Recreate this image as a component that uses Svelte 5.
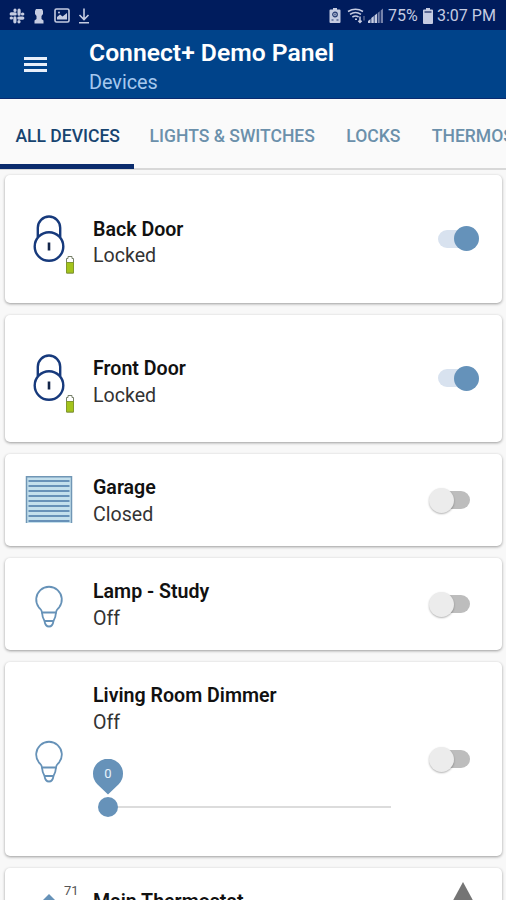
<script lang="ts">
    type Device = {
        name: string;
        status: string;
        kind: "lock" | "garage" | "bulb" | "thermostat";
        on?: boolean;
        level?: number;
    };

    const tabs = ["All Devices", "Lights & Switches", "Locks", "Thermostats"];
    let activeTab = 0;

    let devices: Device[] = [
        { name: "Back Door", status: "Locked", kind: "lock", on: true },
        { name: "Front Door", status: "Locked", kind: "lock", on: true },
        { name: "Garage", status: "Closed", kind: "garage", on: false },
        { name: "Lamp - Study", status: "Off", kind: "bulb", on: false },
        { name: "Living Room Dimmer", status: "Off", kind: "bulb", on: false, level: 0 },
        { name: "Main Thermostat", status: "Heat", kind: "thermostat" },
    ];

    const slats = [5, 10, 15, 20, 25, 30, 35, 40, 45];

    function toggle(device: Device) {
        device.on = !device.on;
        devices = devices;
    }
</script>

<div class="screen">
    <div class="status-bar">
        <div class="notifications">
            <svg class="slack" width="16" height="16" viewBox="0 0 16 16">
                <path d="M6.2 5.900H2.200M10.100 6.200V2.200M9.800 10.100h4M5.900 9.800v4" />
                <path d="M6 2.200v.3M13.500 6h.3M10 13.500v.3M2.200 10h.3" />
            </svg>
            <svg class="keyhole" width="10" height="16" viewBox="0 0 10 16">
                <path d="M2 1h6l1 2v3L7.5 8v3l2 1.500v3H.5v-3l2-1.500V8L1 6V3z" />
            </svg>
            <svg class="picture" width="16" height="15" viewBox="0 0 16 15">
                <rect x="1" y="1" width="14" height="13" rx="1.5" />
                <path d="M3 11.5V9l3-2.500 2.500 2L13 5v6.500z" />
                <circle cx="5" cy="4.5" r="1" />
            </svg>
            <svg class="download" width="12" height="16" viewBox="0 0 12 16">
                <path d="M6 .5v11M1.5 7L6 11.5 10.5 7M1 14.7h10" />
            </svg>
        </div>
        <div class="system">
            <svg class="saver" width="12" height="15" viewBox="0 0 12 15">
                <path class="solid" d="M4 0h4v1.5h2.500q1 0 1 1V14q0 1-1 1h-9q-1 0-1-1V2.500q0-1 1-1H4z" />
                <circle cx="6" cy="6.5" r="2.3" />
                <path d="M2.5 12h2M7.5 12h2M6 5.5v2" />
            </svg>
            <svg class="wifi" width="19" height="16" viewBox="0 0 19 16">
                <path d="M1 3.5q7.500-4.500 15 0M3 6.300q5.500-3.600 11 0M5.400 9q3.100-2 6.200 0" />
                <path d="M8 11.2h2M13 8.500v6M11.300 12.800l1.700 1.700 1.700-1.700" />
                <path class="faint" d="M17 12.5V8" />
            </svg>
            <svg class="signal" width="15" height="15" viewBox="0 0 15 15">
                <path d="M0 15v-2l2.500-2v4zM3.300 15v-5l2.500-2v7zM6.500 15V7.500L9 5.500V15z" />
                <path class="dim" d="M9.700 5l2-1.700V15h-2zM12.700 2.500L15 .5V15h-2.300z" />
            </svg>
            <span class="percent">75%</span>
            <svg class="battery" width="10" height="16" viewBox="0 0 10 16">
                <path d="M3 0h4v1.5h2q1 0 1 1V15q0 1-1 1H1q-1 0-1-1V2.500q0-1 1-1h2z" />
                <path class="gap" d="M1.5 3h7v2h-7z" />
            </svg>
            <span class="clock">3:07 PM</span>
        </div>
    </div>

    <header>
        <button class="menu" aria-label="Menu">
            <i></i>
            <i></i>
            <i></i>
        </button>
        <div>
            <h1>Connect+ Demo Panel</h1>
            <p>Devices</p>
        </div>
    </header>

    <nav>
        {#each tabs as tab, i}
            <button class:active={i === activeTab} on:click={() => (activeTab = i)}>{tab}</button>
        {/each}
    </nav>

    <main>
        {#each devices as device}
            <div
                class="card"
                class:lock={device.kind === "lock"}
                class:dimmer={device.level !== undefined}
                class:thermostat={device.kind === "thermostat"}
            >
                <div class="icon">
                    {#if device.kind === "lock"}
                        <svg width="48" height="48" viewBox="0 0 48 48">
                            <g fill="none" stroke="#173a7c" stroke-width="2.4">
                                <path d="M12.8 22V12.700a11.200 11.200 0 0 1 22.400 0V22" />
                                <circle cx="24" cy="31.5" r="14.300" />
                            </g>
                            <path d="M24 27.5v8" stroke="#14264a" stroke-width="2.6" />
                        </svg>
                        <svg class="badge" width="10" height="19" viewBox="0 0 10 19">
                            <path d="M3 1.5h4v2h1.500V18h-7V3.500H3z" fill="#fff" stroke="#77806a" />
                            <path d="M1.5 7.5h7V18h-7z" fill="#a4c41c" stroke="#82992c" />
                        </svg>
                    {:else if device.kind === "garage"}
                        <svg width="48" height="48" viewBox="0 0 48 48">
                            <path d="M1 0h46v47H1z" fill="#c3dfec" />
                            <path d="M1.5 47V.8h45V47" fill="none" stroke="#7096b5" stroke-width="1.5" />
                            {#each slats as y}
                                <path d="M3.5 {y}h41" stroke="#6791b8" stroke-width="2" />
                            {/each}
                        </svg>
                    {:else if device.kind === "bulb"}
                        <svg width="48" height="48" viewBox="0 0 48 48">
                            <g fill="none" stroke="#6692b8" stroke-width="1.8">
                                <path d="M17 32.5C17 30 15.300 29 13.800 27.300A12.800 12.800 0 1 1 34.200 27.300C32.700 29 31 30 31 32.500z" />
                                <path d="M17 32.5q.3 5 2.500 8.500h9q2.200-3.500 2.500-8.500M19.500 41q.8 5.500 4.500 5.500t4.500-5.500" />
                            </g>
                        </svg>
                    {:else}
                        <svg width="48" height="48" viewBox="0 0 48 48">
                            <path d="M24 4l14 14-14 14-14-14z" fill="#6692b8" />
                        </svg>
                        <span class="temperature">71</span>
                    {/if}
                </div>

                <div class="info">
                    <h2>{device.name}</h2>
                    <p>{device.status}</p>
                    {#if device.level !== undefined}
                        <div class="slider">
                            <div class="handle" style="left: {device.level}%">
                                <div class="bubble">
                                    <svg width="30" height="36" viewBox="0 0 30 36">
                                        <path d="M15 35.5L4.300 25.200a15 15 0 1 1 21.400 0z" fill="#6692b9" />
                                    </svg>
                                    <span>{device.level}</span>
                                </div>
                            </div>
                        </div>
                    {/if}
                </div>

                {#if device.kind === "thermostat"}
                    <svg class="up" width="26" height="24" viewBox="0 0 26 24">
                        <path d="M13 0l13 24H0z" fill="#757575" />
                    </svg>
                {:else}
                    <button
                        class="switch"
                        class:on={device.on}
                        aria-label={device.name}
                        on:click={() => toggle(device)}
                    ></button>
                {/if}
            </div>
        {/each}
    </main>
</div>

<style>
    :global(body) {
        margin: 0;
        overflow: hidden;
    }

    .screen {
        width: 506px;
        height: 900px;
        overflow: hidden;
        background: #f8f8f8;
        font-family: Roboto, "Liberation Sans", sans-serif;
        color: #111;
    }

    svg {
        display: block;
        flex-shrink: 0;
    }

    button {
        border: none;
        padding: 0;
        background: none;
        font-family: inherit;
    }

    h1,
    h2,
    p {
        margin: 0;
    }

    .status-bar {
        display: flex;
        justify-content: space-between;
        align-items: center;
        height: 30px;
        padding: 1px 9px 0;
        box-sizing: border-box;
        background: #001c5d;
        color: #c5cce2;
        fill: #c5cce2;
    }

    .notifications,
    .system {
        display: flex;
        align-items: center;
    }

    .notifications {
        gap: 9px;
    }

    .slack,
    .download,
    .wifi {
        fill: none;
        stroke: #c5cce2;
        stroke-width: 1.6;
    }

    .slack {
        stroke-width: 3.2;
        stroke-linecap: round;
    }

    .picture rect {
        fill: none;
        stroke: #c5cce2;
        stroke-width: 1.6;
    }

    .picture {
        margin-left: 1px;
    }

    .download {
        margin-left: -1px;
    }

    .saver circle,
    .saver path:not(.solid) {
        fill: none;
        stroke: #253b72;
        stroke-width: 1.2;
    }

    .wifi {
        margin-left: 6px;
        stroke-width: 1.5;
    }

    .wifi .faint {
        stroke: #56658f;
    }

    .signal {
        margin-left: 2px;
    }

    .dim {
        fill: #7582aa;
    }

    .percent,
    .clock {
        font-size: 16px;
        line-height: 20px;
        white-space: nowrap;
    }

    .percent {
        width: 30px;
        margin-left: 5px;
    }

    .battery {
        margin: 0 4px 0 5px;
    }

    .gap {
        fill: #5b6893;
    }

    .clock {
        width: 60px;
    }

    header {
        display: flex;
        height: 69px;
        box-sizing: border-box;
        border-bottom: 1px solid #0a2b70;
        background: #00438a;
        color: #fff;
    }

    .menu {
        display: flex;
        flex-direction: column;
        gap: 3px;
        width: 23px;
        margin: 27px 42px 0 24px;
    }

    .menu i {
        height: 3px;
        background: #e8effa;
    }

    h1 {
        margin-top: 7px;
        font-size: 24.7px;
        font-weight: 600;
        line-height: 32px;
        white-space: nowrap;
    }

    header p {
        font-size: 19.8px;
        line-height: 27px;
        color: #a6c8ee;
    }

    nav {
        position: relative;
        display: flex;
        height: 71px;
        box-sizing: border-box;
        border-bottom: 2px solid #d8d8d8;
        background: #fafafa;
    }

    nav button {
        flex-shrink: 0;
        height: 70px;
        padding: 8px 16px 0 15.4px;
        box-sizing: border-box;
        border-bottom: 5px solid transparent;
        font-size: 17.55px;
        font-weight: 500;
        text-transform: uppercase;
        color: #6b90ab;
    }

    nav button.active {
        padding-right: 14.3px;
        color: #174470;
        border-bottom-color: #0b2c6d;
    }

    main {
        display: flex;
        flex-direction: column;
        gap: 12px;
        padding: 5px 4px 0 5px;
    }

    .card {
        display: flex;
        align-items: center;
        height: 92px;
        padding: 0 23px 0 20px;
        box-sizing: border-box;
        border-radius: 5px;
        background: #fff;
        box-shadow: 0 1px 3px rgba(0, 0, 0, 0.38);
    }

    .card.lock {
        height: 127.5px;
    }

    .card.dimmer {
        height: 194px;
    }

    .icon {
        position: relative;
        flex-shrink: 0;
        width: 48px;
        height: 48px;
    }

    .badge {
        position: absolute;
        left: 40px;
        top: 40px;
    }

    .info {
        flex: 1;
        align-self: flex-start;
        padding: 21px 0 0 20px;
    }

    .lock .info {
        padding-top: 41.5px;
    }

    h2,
    .info p {
        font-size: 19.6px;
        line-height: 26.5px;
        white-space: nowrap;
    }

    h2 {
        font-weight: 600;
    }

    .info p {
        font-weight: 400;
        color: #333;
    }

    .slider {
        position: relative;
        width: 283px;
        height: 2px;
        margin: 70px 0 0 15px;
        background: #dcdcdc;
    }

    .handle {
        position: absolute;
        top: -9px;
        width: 20px;
        height: 20px;
        margin-left: -10px;
        border-radius: 50%;
        background: #6692b9;
    }

    .bubble {
        position: absolute;
        left: -5px;
        bottom: 22px;
        width: 30px;
        height: 36px;
    }

    .bubble span {
        position: absolute;
        top: 7px;
        left: 0;
        width: 30px;
        font-size: 13px;
        line-height: 16px;
        text-align: center;
        color: #e6f2fc;
    }

    .switch {
        display: flex;
        align-items: center;
        position: relative;
        flex-shrink: 0;
        width: 50px;
        height: 26px;
    }

    .switch::before {
        content: "";
        width: 32px;
        height: 18px;
        margin-left: 9px;
        border-radius: 9px;
        background: #bdbdbd;
    }

    .switch::after {
        content: "";
        position: absolute;
        left: 0;
        width: 25px;
        height: 25px;
        border-radius: 50%;
        background: #ececec;
        box-shadow: 0 1px 2px rgba(0, 0, 0, 0.3);
    }

    .switch.on::before {
        background: #d8e2ef;
    }

    .switch.on::after {
        left: 25px;
        background: #6592ba;
        box-shadow: none;
    }

    .card.thermostat {
        flex-shrink: 0;
        height: 130px;
        align-items: flex-start;
    }

    .thermostat .icon {
        margin-top: 22px;
    }

    .temperature {
        position: absolute;
        left: 39px;
        top: -7px;
        font-size: 13px;
        line-height: 15px;
        color: #555;
    }

    .up {
        margin: 14px 3px 0 0;
    }
</style>
